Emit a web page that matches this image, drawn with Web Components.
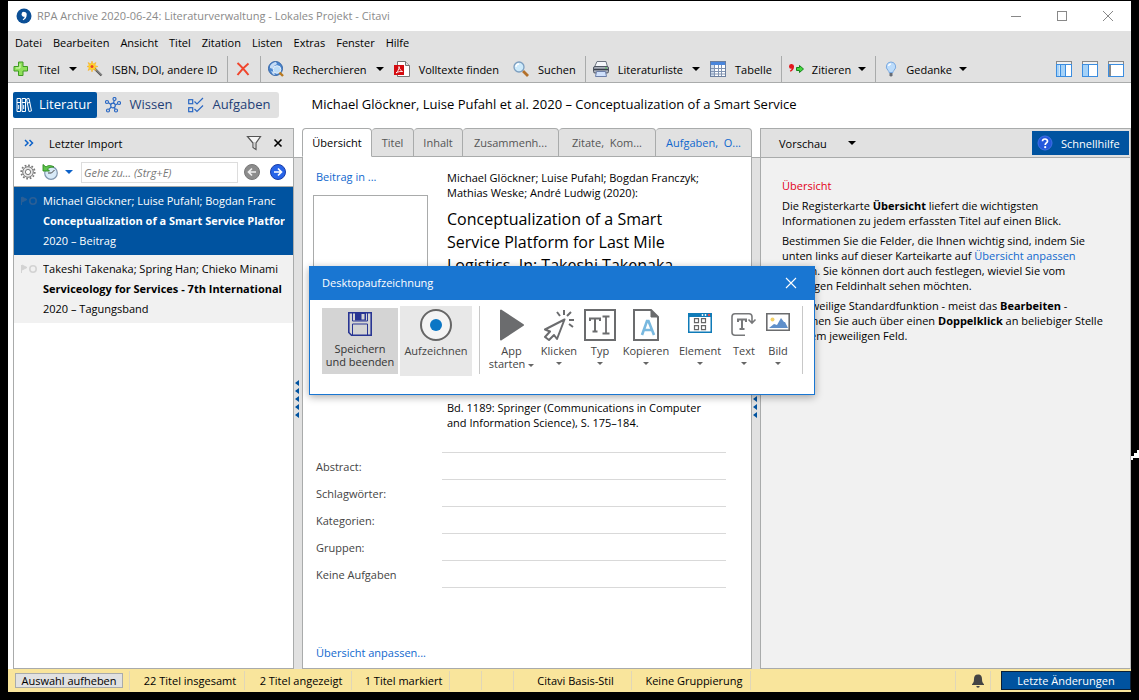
<!DOCTYPE html>
<html lang="de">
<head>
<meta charset="utf-8">
<title>Citavi</title>
<style>
html, body { margin: 0; height: 100%; }
body {
  --small: 11px; --medium: 13px; --title: 16px;
  --grey: #e1e1e1; --line: #a9abab; --blue: #0053a0; --link: #1068ce; --pale: #f1f1f1;
  background: #000; color: #000;
  font: 11px/15px "Open Sans", "Noto Sans", sans-serif;
}
</style>
</head>
<body>
<citavi-app></citavi-app>
<script>
const ICONS = {
  logo: `<circle cx="8" cy="8" r="7.500" fill="#0b4f96"/><path d="M5.500 6.200a2.600 2.600 0 1 1 5.200.6c0 2.700-1.300 4.500-3.500 5.400l-.5-.9c1.100-.7 1.800-1.500 1.900-2.600a2.600 2.600 0 0 1-3.100-2.500z" fill="#fff"/>`,
  plus: `<path d="M6 1.500h4.500V6H15v4.500h-4.500V15H6v-4.500H1.500V6H6z" transform="translate(-.5 -.5)" fill="#8fe05a" stroke="#3f9a22"/><path d="M7 3v4H3" fill="none" stroke="#d5f7bb"/>`,
  wand: `<path d="M7 7l7.500 7.500" stroke="#555" stroke-width="2.400"/><path d="M8 7.500l6.500 6.500" stroke="#bbb" stroke-width=".8"/><path d="M5 0l1 3 3-1.500L7.800 4.500 11 5.500 7.800 6.500 9 9.500 6 8l-1 3-1-3-3 1.500 1.300-3L0 5.500l2.300-1L1 1.500 4 3z" fill="#ffd62a" stroke="#f5a623" stroke-width=".5"/><circle cx="5" cy="5.500" r="1.500" fill="#e8442c"/>`,
  cross: `<path d="M2.500 2C6 5 9.500 9 13.500 14M13.500 2.500C9 6 5.500 10 2.500 14" fill="none" stroke="#f0452c" stroke-width="2"/>`,
  globe: `<circle cx="7.500" cy="7.500" r="7" fill="#4b86cf" stroke="#3565a5"/><path d="M2 5c2-3 4-4 6-4l1 2-3 2-1 3-3-1z" fill="#c6dcf5"/><path d="M3 10l3 1 1 3-2-.5z" fill="#c6dcf5"/><circle cx="9" cy="8.500" r="3.800" fill="#c9e4fa" fill-opacity=".9" stroke="#e8f1fa"/><path d="M11.500 11.500l3.500 3.500" stroke="#b8791f" stroke-width="2.400"/>`,
  pdf: `<path d="M3.500.5h8l4 4v11h-12z" fill="#fff" stroke="#777"/><path d="M11.500.5v4h4" fill="#ddd" stroke="#777"/><path d="M0 4h10v10H0z" fill="#d40b10"/><path d="M2 12c2-1.500 3-4 3-6.500.5 3 2 4.500 3.500 5-2-.3-4.500.2-6.500 1.500z" fill="none" stroke="#fff" stroke-width=".9"/>`,
  lens: `<path d="M10 10l5 5" stroke="#b3702a" stroke-width="2.800"/><circle cx="6" cy="6" r="5" fill="#cdeafb" stroke="#7d9fc0" stroke-width="1.300"/><path d="M3 6a3 3 0 0 1 3-3" fill="none" stroke="#fff" stroke-width="1.300"/>`,
  printer: `<path d="M4 .5h9L14.500 6h-13z" fill="#f4f6fa" stroke="#6d7480"/><rect x=".5" y="5.500" width="15" height="6.500" rx="1.500" fill="#a9afba" stroke="#4e5562"/><path d="M1 8.500h14" stroke="#39404d" stroke-width="1.500"/><path d="M3.500 10.500h9l1 5h-11z" fill="#cfe0fb" stroke="#6d7fa8"/><rect x="12" y="6.500" width="2" height="1" fill="#4cc94c"/>`,
  table: `<rect x=".5" y=".5" width="15" height="15" fill="#fff" stroke="#6b7f9f"/><path d="M1 1h14v3H1z" fill="#4a86dc"/><path d="M1 4h3v11H1z" fill="#cfdcec"/><path d="M4.500 4v11M8.500 4v11M11.500 4v11M1 7.500h14M1 10.500h14M1 13h14" stroke="#8194b2"/>`,
  cite: `<path d="M0 5.300A2.500 2.500 0 1 1 5 5.800c0 2.500-1.500 4-3.500 5l-.7-1c1-.6 1.700-1.300 1.900-2.200A2.300 2.300 0 0 1 0 5.300z" fill="#e2161b"/><path d="M7.500 6.500h3V4.500l4 3.500-4 3.500V9.500h-3z" fill="#43d63e" stroke="#15861a"/>`,
  bulb: `<path d="M8 1a4.700 4.700 0 0 1 3 8.300c-.8.800-1 1.700-1 2.200H6c0-.5-.2-1.400-1-2.200A4.700 4.700 0 0 1 8 1z" fill="#bcdcfb" stroke="#7ba9e0"/><path d="M5.500 5c.3-1.400 1.300-2 2.500-2" stroke="#fff" fill="none" stroke-width="1.500"/><path d="M6.500 12h3v2.500l-1 1h-1l-1-1z" fill="#666c75"/>`,
  cols3: `<rect x=".5" y="3.500" width="15" height="12" fill="#fff" stroke="#3b8de0"/><path d="M0 0h16v3.500H0z" fill="#888"/><path d="M1 1h14v2H1z" fill="#f2f2f2"/><path d="M1 4h2.500v11H1zM5 4h4v11H5z" fill="#a5d2f8"/><path d="M4.500 3v12M9.500 3v12M0 3.500h16" stroke="#3b8de0"/>`,
  cols2: `<rect x=".5" y="3.500" width="15" height="12" fill="#fff" stroke="#3b8de0"/><path d="M0 0h16v3.500H0z" fill="#888"/><path d="M1 1h14v2H1z" fill="#f2f2f2"/><path d="M1 4h5v11H1z" fill="#a5d2f8"/><path d="M6.500 3v12M0 3.500h16" stroke="#3b8de0"/>`,
  cols1: `<rect x=".5" y="3.500" width="15" height="12" fill="#fff" stroke="#3b8de0"/><path d="M0 0h16v3.500H0z" fill="#888"/><path d="M1 1h14v2H1z" fill="#f2f2f2"/><path d="M1 4h2v11H1z" fill="#888"/><path d="M0 3.500h16" stroke="#3b8de0"/>`,
  books: `<g fill="none" stroke="#fff"><path d="M1 1.500h3.500v13H1zM6 1.500h3.500v13H6zM1 5.500h3.500M6 5.500h3.500M2.700 8v4M7.700 8v4"/><path d="M10.500 2l2.500-.6 2.500 12.500-2.500.6zM11.500 6l2.500-.6"/></g>`,
  net: `<g fill="none" stroke="#2a68c4" stroke-width="1.200"><circle cx="8" cy="8.500" r="2.300"/><circle cx="9.500" cy="2" r="1.500"/><circle cx="2" cy="5" r="1.500"/><circle cx="14" cy="6" r="1.500"/><circle cx="3" cy="13.500" r="1.500"/><circle cx="11" cy="13.500" r="1.500"/><path d="M8.500 6.200l.7-2.700M3.500 5.700l2.400 1.800M10.300 8l2.300-1.200M6.200 10l-2.100 2.300M9.200 10.500l1 1.600"/></g>`,
  checks: `<g fill="none" stroke="#2a68c4" stroke-width="1.200"><rect x=".7" y="2.700" width="4" height="4"/><rect x=".7" y="10.700" width="4" height="4"/><path d="M6.500 4.500l2.500 2.500 6-6M6.500 12l2.500 2.500 6-6"/></g>`,
  funnel: `<path d="M1.500 1.500h13L10 8v6.500l-3-2V8z" fill="#f6f6f6" stroke="#555" stroke-width="1.200"/><path d="M8 7v5" stroke="#aaa"/>`,
  close: `<path d="M4.500 4.500l7 7M11.500 4.500l-7 7" stroke="#000" stroke-width="1.600"/>`,
  raquo: `<path d="M4 5l3 3-3 3M8.500 5l3 3-3 3" fill="none" stroke="#0d62c9" stroke-width="1.500"/>`,
  gear: `<circle cx="8" cy="8" r="6.700" fill="none" stroke="#777" stroke-width="1.800" stroke-dasharray="1.700 1.800"/><circle cx="8" cy="8" r="5.300" fill="#e6e6e6" stroke="#777"/><circle cx="8" cy="8" r="2.600" fill="#fff" stroke="#777"/>`,
  history: `<circle cx="9" cy="9" r="6.300" fill="#d8eaf8" stroke="#7f95ad" stroke-width="1.200"/><path d="M6 9h3.500l3-3" fill="none" stroke="#444"/><path d="M12 3C9 1 6 1 4 3L1 .5V7h6.500L5.500 5C7 3.500 9 3 12 3z" fill="#5fc44a" stroke="#2b8a20" stroke-width=".9"/>`,
  back: `<circle cx="8" cy="8" r="7.500" fill="#8c8c8c" stroke="#777"/><path d="M12 8H5M8 4.500L4.500 8 8 11.500" fill="none" stroke="#eee" stroke-width="1.700"/>`,
  forward: `<circle cx="8" cy="8" r="7.500" fill="#2864e8" stroke="#1a3da8"/><path d="M4 8h7M8 4.500L11.500 8 8 11.500" fill="none" stroke="#fff" stroke-width="1.700"/>`,
  help: `<circle cx="8" cy="8" r="7" fill="#2458dc" stroke="#3f70e6"/><path d="M5.500 6.200C5.600 3.200 10.600 3.300 10.500 6.200 10.400 8 8.200 8 8.200 10" fill="none" stroke="#fff" stroke-width="1.700"/><circle cx="8.200" cy="12.200" r="1.100" fill="#fff"/>`,
  mark: `<path d="M.5 3v8M1 3l5 2.500L1 8z" fill="currentColor" stroke="currentColor"/><circle cx="12" cy="7" r="3.200" fill="none" stroke="currentColor" stroke-width="1.600"/>`,
  bell: `<path d="M8 1.500c3 0 4 2 4 4.500 0 3 .7 4 2 5.200V12H2v-.8C3.300 10 4 9 4 6c0-2.500 1-4.500 4-4.500z" fill="#444"/><path d="M6.300 13h3.400a1.700 1.700 0 0 1-3.400 0z" fill="#444"/>`,
  min: `<path d="M3 8.500h10" stroke="#888"/>`,
  max: `<rect x="3.500" y="3.500" width="9" height="9" fill="none" stroke="#888"/>`,
  shut: `<path d="M3 3l10 10M13 3L3 13" stroke="#888"/>`,
  shutWhite: `<path d="M3 3l10 10M13 3L3 13" stroke="#fff" stroke-width="1.100"/>`,
};
const BIG = {
  save: `<path d="M4.800 4.800h22.400v22.400H7.500l-2.700-2.700z" fill="none" stroke="#283593" stroke-width="1.600"/><path d="M8.500 27V16h15v11M8.500 5v8h15V5" fill="none" stroke="#283593"/><path d="M11 4.500h11v8H11z" fill="#283593"/><path d="M17.500 6h3v5.500h-3z" fill="#d4d4d4"/>`,
  record: `<circle cx="16" cy="16" r="15" fill="#f4f4f4" stroke="#666" stroke-width="2"/><circle cx="16" cy="16" r="6" fill="#0b76c5"/>`,
  play: `<path d="M5 1.500v29L27 16z" fill="#6b6c6e" stroke="#6b6c6e" stroke-width="2" stroke-linejoin="round"/>`,
  click: `<g fill="none" stroke="#6b6c6e" stroke-width="2" stroke-linejoin="round"><path d="M21.500 10.500L2 20.500l5 2L2 28l4 3 5-5 3 4z"/><path d="M21 1v5M14 3l3 4M28 3l-4 4M31 11h-5M26 15l4 3"/></g>`,
  type: `<g fill="none" stroke="#6b6c6e"><path d="M1 1h30v30H1z" stroke-width="2"/><path d="M6 12V9.500h10V12M11 9.500V22M8.500 22.500h5" stroke-width="2"/><path d="M18.500 7.500h7M22 7.500v17M18.500 24.500h7" stroke-width="1.800"/></g>`,
  copy: `<path d="M4 1h17l7 7v23H4z" fill="#fff" stroke="#6b6c6e" stroke-width="2"/><path d="M21 1v7h7z" fill="#6b6c6e" stroke="#6b6c6e"/><path d="M12 26l5-14h1.500L24 26M14 21h8.500" fill="none" stroke="#78b8df" stroke-width="2.600"/>`,
  element: `<path d="M4 4h24v20H4z" fill="#0f7bb8"/><path d="M5.500 8h21v14.500h-21z" fill="#fff"/><circle cx="18.500" cy="6" r=".9" fill="#fff"/><circle cx="21.500" cy="6" r=".9" fill="#fff"/><circle cx="25" cy="6" r="1.200" fill="#e84a4a"/><path d="M10.500 9.700h4v4h-4zM17.500 9.700h4v4h-4zM10.500 16.700h4v4h-4zM17.500 16.700h4v4h-4z" fill="none" stroke="#666" stroke-width="1.200"/>`,
  text: `<g fill="none" stroke="#77787a" stroke-width="1.600"><path d="M17 26.200H7a3 3 0 0 1-3-3V7.800a3 3 0 0 1 3-3h14a3 3 0 0 1 3 3v6M20.500 10.500l3.500 3.500 3.500-3.500"/><path d="M10 13v-2.500h8V13M14 10.500v9M11.500 20h5" stroke-width="2"/></g>`,
  image: `<path d="M4.800 4.800h22.400v16.400H4.800z" fill="#fff" stroke="#6b6c6e" stroke-width="1.600"/><circle cx="10.500" cy="10.500" r="2" fill="#f2d06a"/><path d="M7 19l5-4 3 1 4-7 3 4 1 0 3 6z" fill="#5f8fca"/>`,
};

const define = (name, html, setup) => {
  const template = document.createElement('template');
  template.innerHTML = `<style>*{box-sizing:border-box}button,input{font:inherit;color:inherit;margin:0;border:0;background:none;padding:0}a{color:inherit;text-decoration:none}:host{display:block;box-sizing:border-box}</style>` + html;
  customElements.define(name, class extends HTMLElement {
    connectedCallback() {
      if (this.shadowRoot) return;
      this.attachShadow({ mode: 'open' }).append(template.content.cloneNode(true));
      if (setup) setup(this, this.shadowRoot);
    }
  });
};

define('ui-icon', `<style>:host{flex:none;width:16px;height:16px}:host([big]){width:32px;height:32px}svg{display:block;width:100%;height:100%}</style><svg aria-hidden="true"></svg>`, (el, root) => {
  const big = el.hasAttribute('big'), svg = root.querySelector('svg');
  svg.setAttribute('viewBox', big ? '0 0 32 32' : '0 0 16 16');
  svg.innerHTML = (big ? BIG : ICONS)[el.getAttribute('name')];
});

define('ui-caret', `<style>:host{flex:none;width:8px;height:4px}:host([small]){width:6px;height:3px}svg{display:block;width:100%;height:100%}</style><svg viewBox="0 0 8 4" preserveAspectRatio="none" aria-hidden="true"><path d="M0 0h8L4 4z" fill="currentColor"/></svg>`);

define('tool-button', `<style>
:host{flex:none}
button{display:flex;align-items:center;gap:9px;height:26px;padding:0 5px;white-space:nowrap}
:host([compact]) button{gap:7px}
ui-caret{display:none}:host([menu]) ui-caret{display:block}
</style><button type="button"><ui-icon></ui-icon><slot></slot><ui-caret></ui-caret></button>`, (el, root) => {
  const icon = document.createElement('ui-icon');
  icon.setAttribute('name', el.getAttribute('icon'));
  root.querySelector('ui-icon').replaceWith(icon);
  if (el.title) root.querySelector('button').setAttribute('aria-label', el.title);
});

define('title-bar', `<style>
:host{display:flex;align-items:center;height:30px;padding:0 15px 0 8px;background:#fff;color:#8a8a8a;gap:5px;font-size:var(--small)}
h1{flex:1;margin:0;padding-bottom:2px;font:inherit}
nav{display:flex;gap:30px}button{display:block}
</style><ui-icon name="logo"></ui-icon><h1>RPA Archive 2020-06-24: Literaturverwaltung - Lokales Projekt - Citavi</h1>
<nav><button aria-label="Minimieren"><ui-icon name="min"></ui-icon></button><button aria-label="Maximieren"><ui-icon name="max"></ui-icon></button><button aria-label="Schließen"><ui-icon name="shut"></ui-icon></button></nav>`);

define('menu-bar', `<style>
:host{display:flex;gap:11px;height:25px;align-items:center;padding:0 7px 2px;background:var(--grey)}
</style><button>Datei</button><button>Bearbeiten</button><button>Ansicht</button><button>Titel</button><button>Zitation</button><button>Listen</button><button>Extras</button><button>Fenster</button><button>Hilfe</button>`);

define('tool-bar', `<style>
:host{display:flex;align-items:center;height:27px;padding:0 7px 0 0;background:var(--grey);border-bottom:1px solid var(--line)}
i{width:1px;align-self:stretch;background:var(--line);margin:0 2px 0 4px}
span{flex:1}
.apart{margin-left:4px}
div{display:flex;gap:10px}
</style>
<tool-button icon="plus" menu>Titel</tool-button><tool-button icon="wand">ISBN, DOI, andere ID</tool-button><i></i>
<tool-button icon="cross" title="Löschen"></tool-button><i></i>
<tool-button icon="globe" menu>Recherchieren</tool-button><tool-button icon="pdf">Volltexte finden</tool-button><tool-button icon="lens" class="apart">Suchen</tool-button><i></i>
<tool-button icon="printer" menu>Literaturliste</tool-button><tool-button icon="table">Tabelle</tool-button><i></i>
<tool-button icon="cite" menu compact>Zitieren</tool-button><i></i>
<tool-button icon="bulb" menu compact>Gedanke</tool-button><span></span>
<div><button aria-label="Drei Spalten"><ui-icon name="cols3"></ui-icon></button><button aria-label="Zwei Spalten"><ui-icon name="cols2"></ui-icon></button><button aria-label="Eine Spalte"><ui-icon name="cols1"></ui-icon></button></div>`);

define('work-areas', `<style>
:host{display:flex;align-items:center;height:45px;padding:0 5px 2px}
nav{display:flex;background:var(--grey);border-radius:3px;font-size:var(--medium);color:#1f3f77}
button{display:flex;align-items:center;gap:8px;height:26px;padding:0 8px;white-space:nowrap}
button[aria-current]{background:var(--blue);color:#fff;border-radius:2px;gap:7px;padding:0 6px 0 3px}
h2{margin:0 0 0 33px;font-size:var(--medium);font-weight:400;white-space:nowrap}
</style><nav><button aria-current="page"><ui-icon name="books"></ui-icon>Literatur</button><button><ui-icon name="net"></ui-icon>Wissen</button><button><ui-icon name="checks"></ui-icon>Aufgaben</button></nav>
<h2>Michael Glöckner, Luise Pufahl et al. 2020 – Conceptualization of a Smart Service</h2>`);

define('reference-item', `<style>
:host{display:flex;gap:5px;padding:4px 2px 4px 6px;background:var(--pale);color:#000;line-height:20px;overflow:hidden}
:host([selected]){background:var(--blue);color:#fff}
ui-icon{margin-top:3px;width:18px;color:#d3d3d3}:host([selected]) ui-icon{color:#2a5f96}
div{min-width:0;overflow:hidden;white-space:nowrap}
p,h3{margin:0;font-size:inherit}
p{font-weight:400}
</style><ui-icon name="mark"></ui-icon><div><p><slot name="authors"></slot></p><h3><slot name="title"></slot></h3><p><slot name="kind"></slot></p></div>`);

define('reference-list', `<style>
:host{border:1px solid var(--line);background:#fff;min-width:0;overflow:hidden}
header{display:flex;align-items:center;height:29px;background:var(--grey);border-bottom:1px solid var(--line);padding:0 7px}
h2{flex:1;margin:0 0 0 12px;font:inherit}
header button+button{margin-left:8px}
.tools{display:flex;align-items:center;height:29px;border-bottom:1px solid var(--line);padding:0 7px 0 6px;gap:6px}
.tools ui-caret{color:#0d62c9}
.tools button{display:flex;align-items:center;gap:7px}
input{flex:1;min-width:0;height:21px;border:1px solid #ddd;padding:0 2px;font-style:italic;margin:0 0 0 2px}
input::placeholder{color:#777;opacity:1}
.tools button:last-child{margin-left:4px}
</style>
<header><button aria-label="Ausklappen"><ui-icon name="raquo"></ui-icon></button><h2>Letzter Import</h2><button aria-label="Filter"><ui-icon name="funnel"></ui-icon></button><button aria-label="Schließen"><ui-icon name="close"></ui-icon></button></header>
<div class="tools"><button aria-label="Einstellungen"><ui-icon name="gear"></ui-icon></button><button aria-label="Verlauf"><ui-icon name="history"></ui-icon><ui-caret></ui-caret></button><input type="text" aria-label="Gehe zu" placeholder="Gehe zu... (Strg+E)"><button aria-label="Zurück"><ui-icon name="back"></ui-icon></button><button aria-label="Vor"><ui-icon name="forward"></ui-icon></button></div>
<reference-item selected><span slot="authors">Michael Glöckner; Luise Pufahl; Bogdan Franc</span><span slot="title">Conceptualization of a Smart Service Platfor</span><span slot="kind">2020 – Beitrag</span></reference-item>
<reference-item><span slot="authors">Takeshi Takenaka; Spring Han; Chieko Minami</span><span slot="title">Serviceology for Services - 7th International</span><span slot="kind">2020 – Tagungsband</span></reference-item>`);

define('pane-splitter', `<style>
:host{display:flex;margin-top:29px;border-top:1px solid var(--line);background:var(--grey);align-items:center;justify-content:center;padding:0 2px 30px 0}
svg{display:block;width:4px;height:40px}
</style><svg viewBox="0 0 4 40"><path d="M4 1v6L0 4zM4 9v6L0 12zM4 17v6L0 20zM4 25v6L0 28zM4 33v6L0 36z" fill="#0053a0"/></svg>`);

define('overview-card', `<style>
:host{display:flex;flex-direction:column;min-width:0}
.tabs{display:grid;grid-template-columns:70fr 42fr 49fr 96fr 97fr 96fr;height:29px}
.tabs button{background:var(--grey);border:1px solid var(--line);border-left-width:0;border-radius:4px 4px 0 0;color:#555;white-space:nowrap;font-size:var(--small);min-width:0;overflow:hidden}
.tabs button:first-child{background:#fff;color:#000;border-left-width:1px;border-bottom-color:#fff}
.tabs button:last-child{color:var(--link)}
.body{flex:1;display:flex;flex-direction:column;border:1px solid var(--line);border-top:0;background:#fff;padding:12px 25px 8px 13px}
.top{display:grid;grid-template-columns:131px 1fr;height:283px}
a{color:var(--link)}
.cover{width:115px;height:150px;border:1px solid var(--line);margin:11px 0 0 -3px}
p{margin:0;white-space:nowrap}
.reference{padding-top:1px}
h2{margin:8px 0 123px;font-size:var(--title);line-height:23px;font-weight:400;white-space:nowrap}
form{margin:0;flex:1}
.row{display:grid;grid-template-columns:126px 1fr;height:27px;align-items:center;color:#444}
.row:first-child{height:28px}
.row input{height:100%;min-width:0;border-bottom:1px solid #d9d9d9}
.row:first-child input{border-top:1px solid #d9d9d9}
.row span+span{height:100%;border-bottom:1px solid #d9d9d9}
</style>
<div class="tabs" role="tablist"><button role="tab" aria-selected="true">Übersicht</button><button role="tab">Titel</button><button role="tab">Inhalt</button><button role="tab">Zusammenh...</button><button role="tab">Zitate,&nbsp; Kom...</button><button role="tab">Aufgaben,&nbsp; O...</button></div>
<div class="body">
<div class="top"><div><a href="#">Beitrag in ...</a><div class="cover"></div></div>
<div class="reference"><p>Michael Glöckner; Luise Pufahl; Bogdan Franczyk;<br>Mathias Weske; André Ludwig (2020):</p><h2>Conceptualization of a Smart<br>Service Platform for Last Mile<br>Logistics. In: Takeshi Takenaka,</h2><p>Bd. 1189: Springer (Communications in Computer<br>and Information Science), S. 175–184.</p></div></div>
<form>
<div class="row"><label for="abs">Abstract:</label><input id="abs"></div>
<div class="row"><label for="key">Schlagwörter:</label><input id="key"></div>
<div class="row"><label for="cat">Kategorien:</label><input id="cat"></div>
<div class="row"><label for="grp">Gruppen:</label><input id="grp"></div>
<div class="row"><span>Keine Aufgaben</span><span></span></div>
</form>
<p><a href="#">Übersicht anpassen...</a></p>
</div>`);

define('quick-help', `<style>
:host{background:var(--pale);border:1px solid var(--line);border-right-color:#bbb;min-width:0}
header{display:flex;align-items:center;height:29px;background:var(--grey);border-bottom:1px solid var(--line);padding:0 1px 0 18px}
.drop{display:flex;align-items:center;gap:21px;margin-right:auto}
.help{display:flex;align-items:center;gap:8px;width:97px;height:24px;padding:0 5px;background:var(--blue);color:#fff}
article{padding:20px 8px 20px 21px}
h2{margin:0;font:inherit;color:#e2001a}
p{margin:5px 0 0;white-space:nowrap}
a{color:var(--link)}
</style>
<header><button class="drop">Vorschau<ui-caret></ui-caret></button><button class="help"><ui-icon name="help"></ui-icon>Schnellhilfe</button></header>
<article><h2>Übersicht</h2>
<p>Die Registerkarte <b>Übersicht</b> liefert die wichtigsten<br>Informationen zu jedem erfassten Titel auf einen Blick.</p>
<p>Bestimmen Sie die Felder, die Ihnen wichtig sind, indem Sie<br>unten links auf dieser Karteikarte auf <a href="#">Übersicht anpassen</a><br>klicken. Sie können dort auch festlegen, wieviel Sie vom<br>jeweiligen Feldinhalt sehen möchten.</p>
<p>Die jeweilige Standardfunktion - meist das <b>Bearbeiten</b> -<br>erreichen Sie auch über einen <b>Doppelklick</b> an beliebiger Stelle<br>in einem jeweiligen Feld.</p></article>`);

define('status-bar', `<style>
:host{display:flex;align-items:center;height:23px;background:#f9e59c;padding-left:7px}
.clear{width:108px;height:15px;line-height:13px;border:1px solid var(--line);background:var(--grey);margin-right:6px}
span{display:flex;align-items:center;justify-content:center;height:19px;border-left:1px solid #e0d6b8;white-space:nowrap}
.text{padding-left:6px}
.fill{flex:1}
.latest{width:130px;height:19px;background:var(--blue);color:#fff;border:1px solid #0a2038;margin-left:10px;line-height:17px}
.bell{border-right:1px solid #e0d6b8;padding-left:10px}
</style><button class="clear">Auswahl aufheben</button>
<span class="text" style="width:115px">22 Titel insgesamt</span><span class="text" style="width:107px">2 Titel angezeigt</span><span class="text" style="width:98px">1 Titel markiert</span><span style="width:32px"></span><span style="width:32px"></span><span class="text" style="width:118px">Citavi Basis-Stil</span><span class="text" style="width:119px">Keine Gruppierung</span><span class="fill"></span>
<span class="bell" style="width:36px"><ui-icon name="bell"></ui-icon></span><button class="latest">Letzte Änderungen</button>`);

define('record-action', `<style>
:host{flex:none;align-self:flex-start;min-width:0}
button{display:flex;flex-direction:column;align-items:center;width:100%;line-height:13px;color:#444;white-space:nowrap;padding:3px 0 0;text-align:center}
ui-caret{display:none;color:#666;margin-top:5px}
ui-icon{margin-bottom:3px}
:host([menu]) ui-caret{display:block}
:host([save]){background:#d4d4d4;margin-top:2px}
:host([save]) button{height:66px;padding-top:0;color:#333}
:host([save]) ui-icon{margin-bottom:2px}
:host([record]){background:#e8e8e8}
:host([record]) button{height:70px}
</style><button type="button"><span></span><slot></slot><ui-caret small></ui-caret></button>`, (el, root) => {
  const icon = document.createElement('ui-icon');
  icon.setAttribute('big', '');
  icon.setAttribute('name', el.getAttribute('icon'));
  root.querySelector('span').replaceWith(icon);
});

define('record-dialog', `<style>
:host{background:#fff;border:1px solid #1976d2;box-shadow:0 2px 8px #0005}
header{display:flex;align-items:center;justify-content:space-between;height:33px;background:#1976d2;color:#fff;padding:0 15px 2px 12px}
h2{margin:0;font:inherit}
.bar{display:flex;padding:6px 11px 0 12px;height:94px}
i{flex:none;width:1px;height:68px;background:#c8c8c8}
.actions{flex:1;display:grid;grid-template-columns:51fr 44fr 38fr 54fr 54fr 34fr 34fr;margin:0 7px 0 6px}
ui-caret{display:inline-block;vertical-align:middle;color:#666}
</style>
<header><h2>Desktopaufzeichnung</h2><button aria-label="Schließen"><ui-icon name="shutWhite"></ui-icon></button></header>
<div class="bar"><record-action save icon="save" style="width:76px">Speichern<br>und beenden</record-action><record-action record icon="record" style="width:72px;margin:0 7px 0 2px">Aufzeichnen</record-action><i></i>
<div class="actions"><record-action icon="play"><div>App<br>starten <ui-caret small></ui-caret></div></record-action><record-action menu icon="click">Klicken</record-action><record-action menu icon="type">Typ</record-action><record-action menu icon="copy">Kopieren</record-action><record-action menu icon="element">Element</record-action><record-action menu icon="text">Text</record-action><record-action menu icon="image">Bild</record-action></div><i></i></div>`);

define('citavi-app', `<style>
:host{display:flex;flex-direction:column;min-height:100vh;padding:1px 8px 8px;background:#000;position:relative}
.window{flex:1;display:flex;flex-direction:column;background:#fff}
main{flex:1;display:grid;grid-template-columns:281px 8px 450fr 8px 371fr;padding-left:5px}
record-dialog{position:absolute;left:309px;top:266px;width:506px}
.pointer{position:absolute;right:0;top:449px;width:8px;height:14px}
</style>
<div class="window"><title-bar></title-bar><menu-bar></menu-bar><tool-bar></tool-bar><work-areas></work-areas>
<main><reference-list></reference-list><pane-splitter></pane-splitter><overview-card></overview-card><pane-splitter></pane-splitter><quick-help></quick-help></main>
<status-bar></status-bar></div>
<record-dialog role="dialog" aria-label="Desktopaufzeichnung"></record-dialog>
<svg class="pointer" viewBox="0 0 8 14" aria-hidden="true"><path d="M8 1H6v3H3v3H0v4h2V9h6z" fill="#fff"/></svg>`);
</script>
</body>
</html>
